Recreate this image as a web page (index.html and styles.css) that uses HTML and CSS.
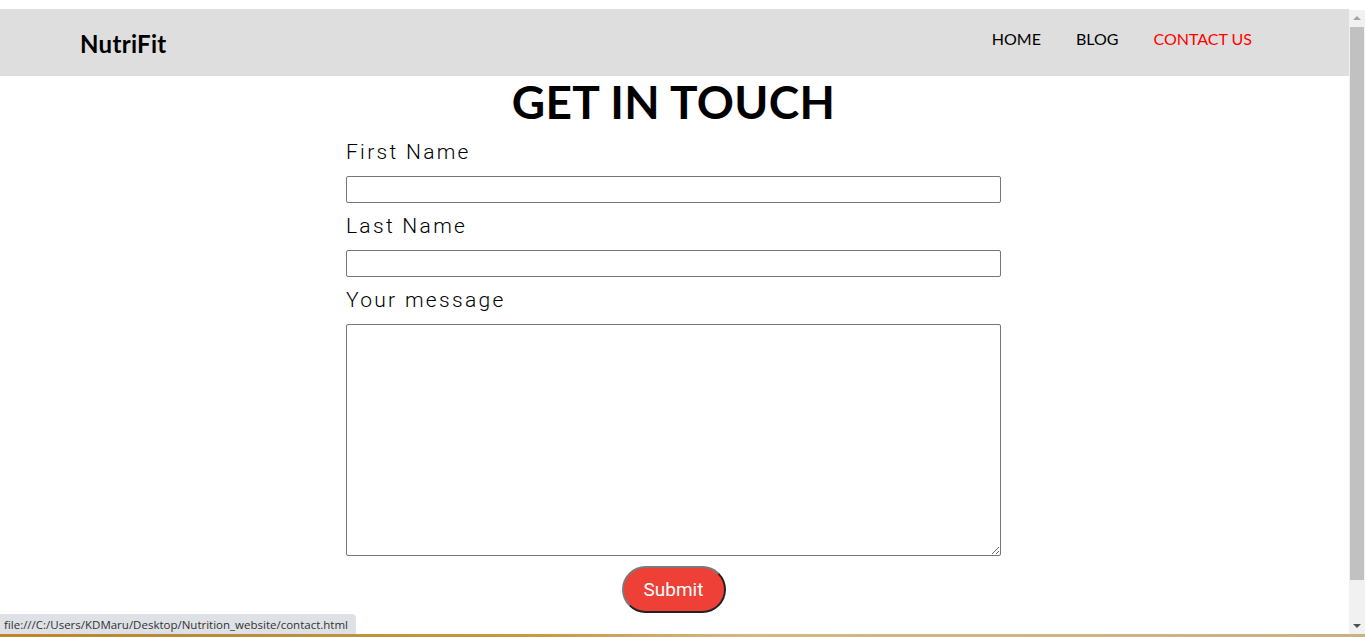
FILE: index.html
```html
<!DOCTYPE html>
<html lang="en">
<head>
<meta charset="utf-8">
<title>Contact - NutriFit</title>
<link rel="stylesheet" href="styles.css">
</head>
<body>
<div class="window">
  <div class="main-row">
    <div class="viewport">
      <header class="site-header">
        <a class="logo" href="#">NutriFit</a>
        <nav class="nav">
          <a href="#" class="nav-link">HOME</a>
          <a href="#" class="nav-link">BLOG</a>
          <a href="#" class="nav-link active">CONTACT US</a>
        </nav>
      </header>
      <main class="contact">
        <h1 class="title">GET IN TOUCH</h1>
        <form class="form">
          <label class="label" for="fn">First Name</label>
          <input class="field" id="fn" type="text">
          <label class="label" for="ln">Last Name</label>
          <input class="field" id="ln" type="text">
          <label class="label" for="msg">Your message</label>
          <textarea class="area" id="msg"></textarea>
          <button class="submit" type="button">Submit</button>
        </form>
      </main>
      <div class="status">file:///C:/Users/KDMaru/Desktop/Nutrition_website/contact.html</div>
    </div>
    <div class="scrollbar">
      <div class="arrow up"></div>
      <div class="thumb-track"><div class="thumb"></div></div>
      <div class="arrow down"></div>
    </div>
  </div>
  <div class="strip"></div>
</div>
</body>
</html>
```
FILE: styles.css
```css
* { box-sizing: border-box; }
html, body { margin: 0; padding: 0; }
body {
  width: 1365px;
  height: 637px;
  overflow: hidden;
  background: #fff;
  font-family: "Lato", "Liberation Sans", sans-serif;
}
.window {
  display: flex;
  flex-direction: column;
  height: 637px;
}
.main-row {
  display: flex;
  height: 634px;
}
.viewport {
  flex: 1;
  position: relative;
  padding-top: 9px;
}
.site-header {
  height: 67px;
  background: #dedede;
  display: flex;
  align-items: center;
  justify-content: space-between;
  padding: 0 97px 0 80px;
}
.logo {
  font-family: "Lato", sans-serif;
  font-weight: 700;
  font-size: 24px;
  letter-spacing: 0.3px;
  color: #000;
  text-decoration: none;
  margin-top: 1px;
}
.nav {
  display: flex;
  gap: 35px;
  margin-top: -8px;
}
.nav-link {
  font-family: "Lato", sans-serif;
  font-size: 16px;
  color: #000;
  text-decoration: none;
}
.nav-link.active { color: #ff0000; }
.contact {
  display: flex;
  flex-direction: column;
  align-items: center;
  padding-right: 2px;
}
.title {
  margin: 0 0 12px;
  font-family: "Lato", sans-serif;
  font-weight: 700;
  font-size: 46px;
  line-height: 52px;
  letter-spacing: 0.3px;
  color: #000;
}
.form {
  width: 655px;
  display: flex;
  flex-direction: column;
}
.label {
  font-family: "Roboto", sans-serif;
  font-weight: 300;
  font-size: 21px;
  line-height: 25px;
  letter-spacing: 2.3px;
  color: #000;
  margin-bottom: 11px;
}
.field {
  height: 27px;
  border: 1px solid #767676;
  border-radius: 2px;
  margin: 0 0 11px;
  padding: 1px 2px;
  font-size: 13px;
}
.area {
  height: 232px;
  border: 1px solid #767676;
  border-radius: 2px;
  margin: 0 0 10px;
  resize: both;
}
.submit {
  align-self: center;
  width: 104px;
  height: 47px;
  border-radius: 24px;
  border-width: 2px;
  border-style: solid;
  border-color: #7a7a7a #222 #222 #7a7a7a;
  background: #ee4036;
  color: #fff;
  font-family: "Roboto", sans-serif;
  font-size: 19px;
  padding: 0;
}
.status {
  position: absolute;
  left: 0;
  bottom: 0;
  height: 20px;
  width: 356px;
  background: #dee1e5;
  border-top-right-radius: 4px;
  font-family: "Open Sans", "DejaVu Sans", sans-serif;
  font-size: 11.5px;
  line-height: 21px;
  color: #333;
  padding-left: 4px;
  white-space: nowrap;
}
.scrollbar {
  width: 16px;
  margin-top: 10px;
  background: #f1f1f1;
  display: flex;
  flex-direction: column;
  align-items: center;
}
.arrow {
  width: 0;
  height: 0;
  border-left: 4px solid transparent;
  border-right: 4px solid transparent;
}
.arrow.up {
  border-bottom: 4px solid #a3a3a3;
  margin: 6px 0 7px;
}
.arrow.down {
  border-top: 4px solid #505050;
  margin: 6px 0 6px;
}
.thumb-track {
  flex: 1;
  width: 100%;
  padding: 0 1px 0 1px;
}
.thumb {
  height: 553px;
  background: #c1c1c1;
}
.strip {
  height: 3px;
  background: linear-gradient(90deg, #c2862a 0%, #b98a3a 14%, #c99a45 40%, #d6b880 55%, #cbb17e 100%);
}
```
